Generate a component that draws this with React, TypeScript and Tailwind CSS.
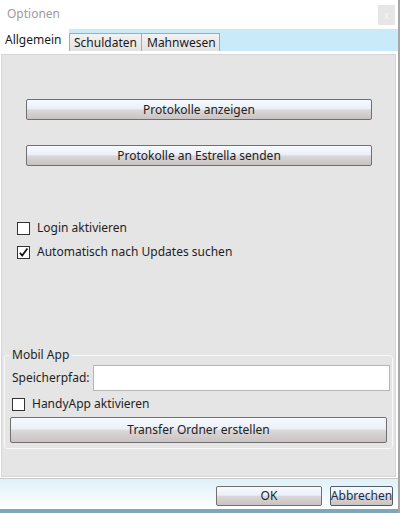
const font = { fontFamily: '"Noto Sans", "Open Sans", Arial, sans-serif' };

function WinButton({ label, className = "" }: { label: string; className?: string }) {
  return (
    <div
      className={`flex items-center justify-center rounded-[2px] border border-[#707070] bg-[linear-gradient(to_bottom,#f7faff_0%,#ebf0f8_45%,#dcd8d8_52%,#c9c2c2_100%)] text-[12px] leading-none text-[#222] ${className}`}
    >
      {label}
    </div>
  );
}

function CheckRow({ label, checked = false, className = "" }: { label: string; checked?: boolean; className?: string }) {
  return (
    <div className={`flex h-[16px] items-center ${className}`}>
      <div className="flex h-[13px] w-[13px] items-center justify-center border border-[#333] bg-white">
        {checked ? (
          <svg width="11" height="11" viewBox="0 0 11 11">
            <path d="M1.8 5.8 L4.2 8.6 L9.4 1.6" fill="none" stroke="#111" strokeWidth="1.7" />
          </svg>
        ) : null}
      </div>
      <span className="ml-[7px] text-[12px] leading-none text-[#1e1e1e]">{label}</span>
    </div>
  );
}

export default function App() {
  return (
    <div className="flex h-[513px] w-[400px] bg-white" style={font}>
      <div className="flex w-[398px] flex-col">
        {/* title bar */}
        <div className="flex h-[29px] items-start justify-between pl-[7px] pr-[3px]">
          <span className="mt-[5px] text-[12px] text-[#9c9c9c]">Optionen</span>
          <div className="mt-[5px] flex h-[20px] w-[17px] items-center justify-center bg-[#e6e6e6] text-[10px] leading-none text-[#f4f4f4]">
            x
          </div>
        </div>

        {/* tab strip */}
        <div className="flex h-[22px] items-end bg-[#c9eaf8]">
          <div className="flex h-[22px] w-[69px] items-center bg-white pl-[5px] text-[12px] text-[#1a1a1a]">Allgemein</div>
          <div className="flex h-[18px] w-[73px] items-center border border-b-0 border-[#a9a9a9] bg-[linear-gradient(to_bottom,#f2f2f2,#e2e2e2)] pl-[4px] text-[12px] text-[#1a1a1a]">
            Schuldaten
          </div>
          <div className="flex h-[18px] w-[78px] items-center border border-b-0 border-l-0 border-[#a9a9a9] bg-[linear-gradient(to_bottom,#f2f2f2,#e2e2e2)] pl-[5px] text-[12px] text-[#1a1a1a]">
            Mahnwesen
          </div>
        </div>

        {/* tab page */}
        <div className="flex h-[427px] flex-col bg-white px-[1px] pt-[3px]">
          <div className="flex h-[423px] w-[395px] flex-col border border-[#d6d6d6] bg-[#e5e5e5]">
            <WinButton label="Protokolle anzeigen" className="ml-[24px] mt-[44px] h-[21px] w-[346px]" />
            <WinButton label="Protokolle an Estrella senden" className="ml-[24px] mt-[25px] h-[21px] w-[346px]" />

            <CheckRow label="Login aktivieren" className="ml-[15px] mt-[54px]" />
            <CheckRow label="Automatisch nach Updates suchen" checked className="ml-[15px] mt-[8px]" />

            <fieldset className="ml-[2px] mt-[87px] w-[389px] rounded-[3px] border border-[#f8f8f8] px-0 pb-[5px]">
              <legend className="ml-[4px] px-[3px] text-[12px] leading-[16px] text-[#1e1e1e]">Mobil App</legend>
              <div className="mt-[2px] flex items-center pl-[7px] pr-[2px]">
                <span className="w-[81px] text-[12px] text-[#1e1e1e]">Speicherpfad:</span>
                <div className="h-[26px] flex-1 border border-[#b4b4b4] bg-white" />
              </div>
              <CheckRow label="HandyApp aktivieren" className="ml-[7px] mt-[5px]" />
              <WinButton label="Transfer Ordner erstellen" className="mx-[5px] mt-[5px] h-[26px]" />
            </fieldset>
          </div>
        </div>

        {/* button bar */}
        <div className="flex h-[31px] items-start justify-end gap-[8px] border-t border-[#c8c8c8] bg-[linear-gradient(to_bottom,#dff1f9,#ffffff)] pr-[5px] pt-[7px]">
          <WinButton label="OK" className="h-[20px] w-[106px]" />
          <div className="flex h-[20px] w-[63px] items-center justify-center rounded-[2px] border border-[#4f5d6b] bg-[linear-gradient(to_bottom,#f7faff_0%,#ebf0f8_45%,#dcd8d8_52%,#c9c2c2_100%)] text-[12px] leading-none text-[#1b2d4d]">
            Abbrechen
          </div>
        </div>
        <div className="h-[4px] bg-[#7ca8bf]" />
      </div>
      <div className="w-[2px] bg-[#a6a6a6]" />
    </div>
  );
}
